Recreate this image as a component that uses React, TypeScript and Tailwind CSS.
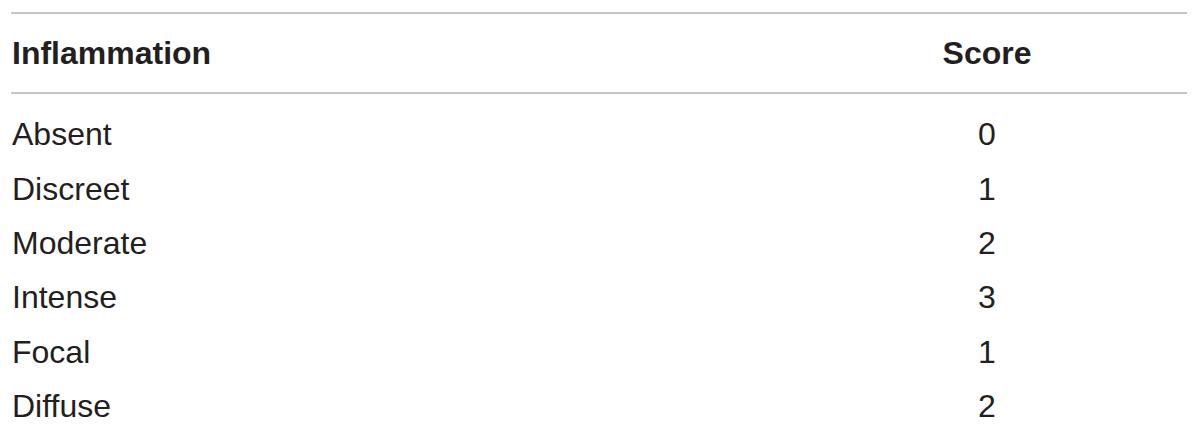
import React from 'react';

const rows = [
  { name: 'Absent', score: 0 },
  { name: 'Discreet', score: 1 },
  { name: 'Moderate', score: 2 },
  { name: 'Intense', score: 3 },
  { name: 'Focal', score: 1 },
  { name: 'Diffuse', score: 2 },
];

const App: React.FC = () => {
  return (
    <div className="w-[1200px] h-[429px] overflow-hidden bg-white pl-[11px] pt-[12px] font-['Liberation_Sans',Arial,sans-serif] text-[#231f20]">
      <div className="w-[1176px]">
        <div className="flex items-center h-[82px] border-t-2 border-b-2 border-[#c6c6c6] text-[32px] leading-[32px] font-bold">
          <div className="flex-1 pl-[1px]">Inflammation</div>
          <div className="w-[400px] text-center">Score</div>
        </div>
        <div className="pt-[13px]">
          {rows.map((row) => (
            <div key={row.name} className="flex items-center h-[54.4px] text-[32px] leading-[32px]">
              <div className="flex-1 pl-[1px]">{row.name}</div>
              <div className="w-[400px] text-center">{row.score}</div>
            </div>
          ))}
        </div>
      </div>
    </div>
  );
};

export default App;
